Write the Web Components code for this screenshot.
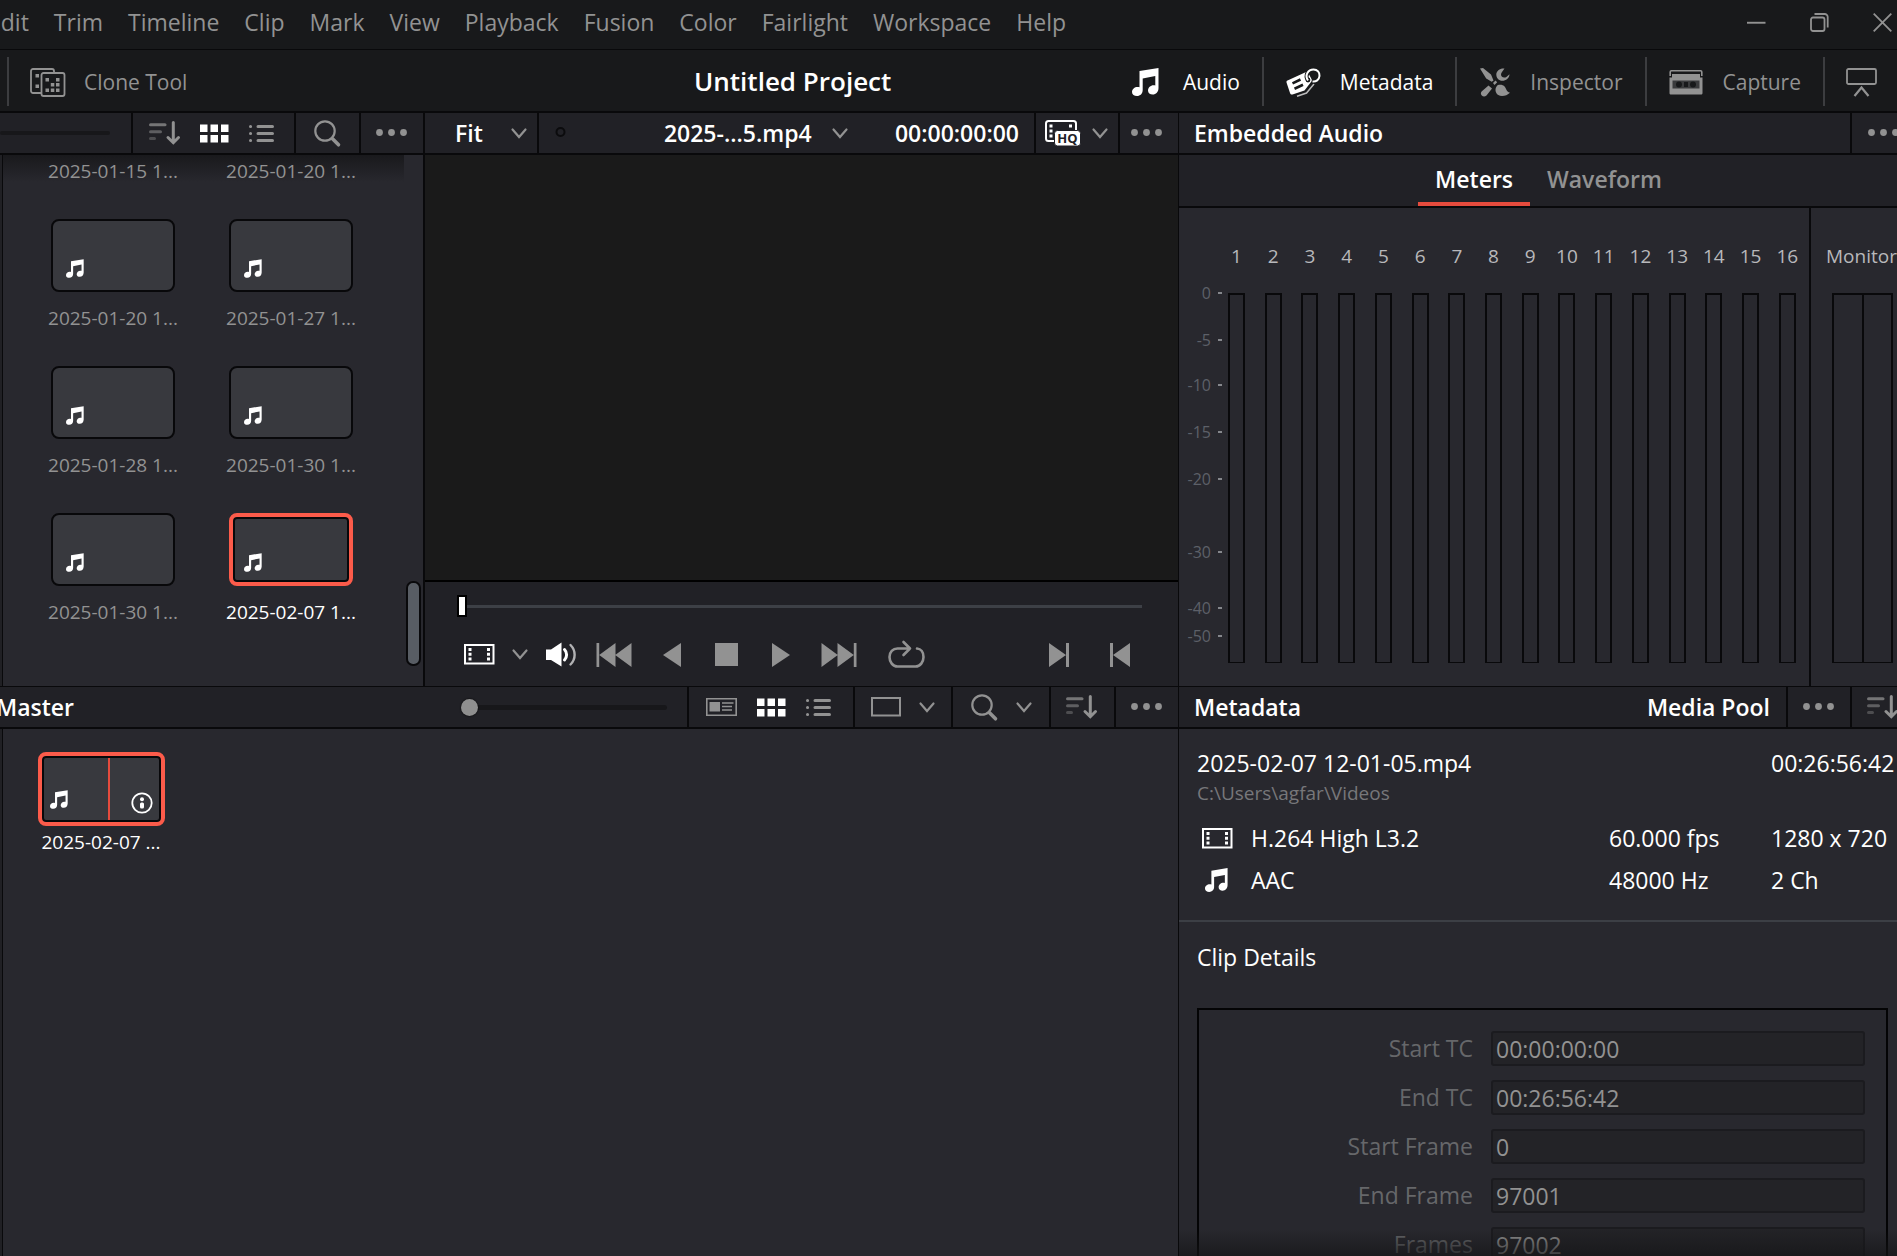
<!DOCTYPE html>
<html lang="en">
<head>
<meta charset="utf-8">
<title>Untitled Project</title>
<style>
  html, body { height: 100%; margin: 0; }
  body {
    background: #28282e;
    overflow: hidden;
    color: #fff;
    font-family: "Open Sans", "Noto Sans", sans-serif;
    font-size: 23px;
    line-height: 30px;
    --bar: #212126;
    --panel: #28282e;
    --top: #18191b;
    --line: #09090b;
    --muted: #929292;
    --accent: #e64b3d;
    --select: #fc5b4a;
  }
</style>
</head>
<body>
<media-page></media-page>
<script>
const BASE = `
  *, *::before, *::after { box-sizing: border-box; }
  button, select, input { font: inherit; color: inherit; background: none; border: 0; padding: 0; margin: 0; border-radius: 0; }
  button { display: flex; align-items: center; }
  select { appearance: none; outline: 0; }
  a { color: inherit; text-decoration: none; }
`;
function define(name, css, html) {
  const template = document.createElement('template');
  customElements.define(name, class extends HTMLElement {
    constructor() {
      super();
      template.innerHTML = `<style>${BASE}${css}</style>${typeof html === 'function' ? html(this) : html}`;
      this.attachShadow({ mode: 'open' }).append(template.content.cloneNode(true));
    }
  });
}

/* Icons: [width, height, markup] */
const NOTE = '<path d="M7.5 3 26.5 0v20c0 4-2.500 6.500-5.800 6.500-2.700 0-4.700-1.500-4.700-4 0-3 2.600-5.300 5.500-5.300.8 0 1.300.1 1.800.300V8L10.700 10.500V22c0 3.800-2.500 6-5.700 6-2.800 0-5-1.400-5-4 0-2.900 2.600-5 5.500-5 .8 0 1.400.1 2 .300z"/>';
const FILM = '<path fill="none" stroke="currentColor" stroke-width="2" d="M1 1h28.500v18.500H1z"/><g><path d="M4.500 4h3v3h-3zM4.500 8.800h3v3h-3zM4.500 13.600h3v3h-3zM23 4h3v3h-3zM23 8.800h3v3h-3zM23 13.600h3v3h-3z"/></g>';
const ICONS = {
  sort: [31, 24, '<g stroke="currentColor" stroke-width="3" stroke-linecap="round" fill="none"><path opacity=".75" d="M1.500 3.800h14.500"/><path opacity=".55" d="M1.500 10.700h10"/><path opacity=".4" d="M1.500 17.600h4"/><path d="M24.300 1.500v19M19 16.500l5.300 5.200 5.200-5.200"/></g>'],
  grid: [29, 19, '<path d="M0 .5h7.500v7.500H0zM10.500.5H18v7.500h-7.500zM21 .5h7.500v7.500H21zM0 11h7.500v7.500H0zM10.500 11H18v7.500h-7.500zM21 11h7.500v7.500H21z"/>'],
  list: [25, 19, '<g stroke="currentColor" stroke-width="3" stroke-linecap="round"><path d="M1.500 2.500h.1M1.500 9.500h.1M1.500 16.500h.1M9 2.500h14.500M9 9.500h14.500M9 16.500h14.500"/></g>'],
  search: [27, 27, '<g fill="none" stroke="currentColor" stroke-linecap="round"><circle cx="11" cy="11" r="9.700" stroke-width="2.200"/><path stroke-width="3.600" d="m18.500 18.800 6 6"/></g>'],
  dots: [31, 8, '<circle cx="3.500" cy="3.500" r="3.400"/><circle cx="15.500" cy="3.500" r="3.400"/><circle cx="27.500" cy="3.500" r="3.400"/>'],
  chevron: [16, 11, '<path fill="none" stroke="currentColor" stroke-width="2.200" stroke-linecap="round" d="m1.500 1.500 6.500 7.500 6.500-7.500"/>'],
  ring: [11, 11, '<circle cx="5.500" cy="4" r="4" fill="none" stroke="currentColor" stroke-width="2"/>'],
  note: [27, 28, NOTE],
  film: [31, 21, FILM],
  clone: [36, 29, '<g fill="none" stroke="currentColor" stroke-width="1.800"><path d="M11 25H3a2 2 0 0 1-2-2V3a2 2 0 0 1 2-2h19a2 2 0 0 1 2 2v1"/><rect x="11.500" y="5" width="23" height="23" rx="2"/></g><path d="M5.500 6h3.500v3.500H5.500zM5.500 16.500h3.500V20H5.500zM15.500 10h3.500v3.500h-3.500zM26 10h3.500v3.500H26zM20.800 15h3.500v3.500h-3.500zM26 15h3.500v3.500H26zM15.500 20.500h3.500V24h-3.500zM20.800 20.500h3.500V24h-3.500zM26 20.500h3.500V24H26z"/>'],
  hq: [36, 26, '<rect x="1" y="1" width="30" height="20" rx="2.500" fill="none" stroke="currentColor" stroke-width="2"/><path d="M4.500 4.500h3v3h-3zM4.500 9.500h3v3h-3zM4.500 14.500h3v3h-3zM24 4.500h3v3h-3z"/><rect x="9.500" y="10.500" width="26" height="15.500" rx="3" fill="currentColor" stroke="#212126" stroke-width="1"/><text x="22.500" y="23" text-anchor="middle" font-family="Open Sans" font-size="13" font-weight="700" fill="#212126">HQ</text>'],
  tag: [34, 29, '<path d="M1.500 12.500 19 4.500c1.500-.6 2.700-.3 3.500 1l3 5.500c.5 1 .3 2-.3 2.800L18.500 22.500 6.500 26.500c-1.200.3-2-.1-2.400-1.200L.6 14.700c-.3-1 0-1.800.9-2.200z"/><path d="M11 28.300 20.500 25l7.500-9" fill="none" stroke="currentColor" stroke-width="1.500" opacity=".7"/><path d="m6.500 15.300 8-3.800M8.500 20.700l8.500-4" stroke="#18191b" stroke-width="2.600"/><circle cx="22" cy="12" r="2.400" fill="#18191b"/><path d="M22 12.500C18.500 7 22 1.500 27.500 1.500c4 0 6.300 3 6 6.500-.300 3.800-3.500 6-7 5.500" fill="none" stroke="#18191b" stroke-width="4"/><path d="M22 12.500C18.500 7 22 1.500 27.500 1.500c4 0 6.300 3 6 6.500-.300 3.800-3.500 6-7 5.500" fill="none" stroke="currentColor" stroke-width="2"/>'],
  tools: [31, 28, '<g transform="translate(1)"><path d="M0 .5 3 0l8 6.500 2.500 6-1.800 1.300-5.500-3.300zM13 15l2.500-2.500 1.700 1.700L14.500 17z"/><path d="M24.500.5c-4.500-.5-8.200 2.300-8.200 6 0 1.800.6 3.300 1.700 4.500 1 1.100 2.600 1.800 4.300 1.800 3.700 0 7-2.700 7.200-6.600l-2.800 2.500c-1.500 1.200-3.600 1.200-4.700.1-1.300-1.300-1.300-3.200 0-4.700z"/><path d="m8.500 17.500 3.500 3-5.500 7c-1.500 1.200-3.500 1.200-4.700 0-1.200-1.100-1.200-2.800-.2-4zM17.500 17.200c2.500-1 5.500-.5 7.300 1.500 1.500 1.800 1.200 4.500 5.200 6-3 3-8.500 4.300-11.700 2.300-3.300-2-3.800-7-.8-9.800z"/></g>'],
  tape: [34, 25, '<path fill="none" stroke="currentColor" stroke-width="1.600" d="M1.200 6V2c0-.8.4-1.200 1.200-1.200h29.200c.8 0 1.200.4 1.200 1.200v4"/><path d="M3 4h28v3.500h2.500V23c0 1-.6 1.600-1.600 1.600H2.100C1.100 24.600.5 24 .5 23V7.500H3z"/><rect x="3.500" y="10.500" width="27" height="8" fill="#3a3b3d"/><circle cx="10" cy="14.500" r="3" fill="#18191b"/><circle cx="24" cy="14.500" r="3" fill="#18191b"/><path fill="#18191b" d="M15 12h4v5h-4z"/>'],
  screen: [31, 29, '<g fill="none" stroke="currentColor" stroke-width="1.800"><rect x="1" y="1" width="29" height="15" rx="1.500"/><path stroke-width="2.200" d="m8.500 28 7-8.500 7 8.500"/></g>'],
  minimize: [19, 19, '<path d="M0 8.800h18.500v1.900H0z"/>'],
  restore: [19, 19, '<g fill="none" stroke="currentColor" stroke-width="1.800"><rect x="1" y="4.500" width="13.500" height="13.500" rx="2"/><path d="M4.500 1h10.200a3 3 0 0 1 3 3v10.500"/></g>'],
  close: [19, 19, '<path fill="none" stroke="currentColor" stroke-width="1.800" d="m.7.700 17.600 17.600M18.300.7.700 18.300"/>'],
  speaker: [32, 25, '<path d="M1 7.500h5L16.500.5v24L6 18H1z"/><g fill="none" stroke="currentColor" stroke-linecap="round"><path stroke-width="3" d="M19.500 7.500c2.800 3 2.800 7.500 0 10.500"/><path stroke-width="2.400" opacity=".65" d="M25.500 3c5.500 5.500 5.500 14 0 19.500"/></g>'],
  first: [36, 24, '<path d="M.5 0h2.700v24H.5zM19.500 0v24L3.200 12zM35.500 0v24L19.200 12z"/>'],
  reverse: [18, 24, '<path d="M18 0v24L0 12z"/>'],
  stop: [23, 23, '<path d="M0 0h23v23H0z"/>'],
  play: [18, 24, '<path d="M0 0v24l18-12z"/>'],
  last: [36, 24, '<path d="M32.800 0h2.700v24h-2.700zM.5 0v24l16.300-12zM16.500 0v24l16.300-12z"/>'],
  loop: [37, 27, '<g fill="none" stroke="currentColor" stroke-width="2.600" stroke-linecap="round" stroke-linejoin="round"><path d="M29 7.500c4 .3 6.500 3.700 6.500 8.500 0 5-3.300 9.500-8 9.500h-18c-4.700 0-8-4.500-8-9.500s3.300-8.500 8-8.500H22M15.500 1l6.500 6.500-6.500 6.500"/></g>'],
  nextEdge: [20, 24, '<path d="M0 0v24l17-12zM17 0h3v24h-3z"/>'],
  prevEdge: [20, 24, '<path d="M20 0v24L3 12zM0 0h3v24H0z"/>'],
  card: [31, 18, '<path fill="none" stroke="currentColor" stroke-width="1.600" d="M.8.800h29.400v16.400H.8z"/><path d="M3.500 4h10.500v9.500H3.500z"/><path fill="none" stroke="currentColor" stroke-width="1.500" d="M16 5h11.500M16 8.500h10M16 12h10"/>'],
  frame: [30, 20, '<path fill="none" stroke="currentColor" stroke-width="2" d="M1 1h28v17.500H1z"/>'],
  info: [22, 22, '<circle cx="11" cy="11" r="9.700" fill="none" stroke="currentColor" stroke-width="1.800"/><circle cx="11" cy="7.200" r="2"/><rect x="9" y="10.500" width="4" height="6" rx="1.500"/>']
};
define('ui-icon', `
  :host { display: inline-flex; flex: none; color: var(--muted); }
  :host([lit]) { color: #fff; }
  svg { display: block; fill: currentColor; overflow: visible; }
`, host => {
  const [w, h, body] = ICONS[host.getAttribute('name')];
  const width = host.getAttribute('width') || w;
  return `<svg width="${width}" height="${Math.round(h * width / w)}" viewBox="0 0 ${w} ${h}" aria-hidden="true">${body}</svg>`;
});
const btn = (icon, label, lit) => `<button aria-label="${label}"><ui-icon name="${icon}"${lit ? ' lit' : ''}></ui-icon></button>`;

/* Top menu with window buttons */
define('menu-bar', `
  :host { display: flex; flex: none; justify-content: space-between; height: 50px; background: var(--top); color: var(--muted); border-bottom: 1px solid var(--line); padding: 0 5px 5px 0; }
  nav, div { display: flex; align-items: center; }
  nav { gap: 25px; margin-left: -12px; }
  div { gap: 44px; }
`, `<nav>${['Edit', 'Trim', 'Timeline', 'Clip', 'Mark', 'View', 'Playback', 'Fusion', 'Color', 'Fairlight', 'Workspace', 'Help'].map(t => `<button>${t}</button>`).join('')}</nav>
  <div>${btn('minimize', 'Minimize')}${btn('restore', 'Restore')}${btn('close', 'Close')}</div>`);

/* One labelled panel switch */
define('tool-toggle', `
  :host { display: flex; align-items: center; height: 49px; }
  :host([divided]) { border-left: 2px solid #3c3d40; }
  button { color: var(--muted); height: 49px; gap: 20px; padding: 2px 22px 0; font-size: 21px; }
  :host(:not([divided])) button { gap: 24px; }
  :host([lit]) button { color: #fff; }
  :host([lit]) ui-icon { color: #fff; }
  :host([compact]) button { gap: 18px; padding: 2px 20px 0 21px; }
`, host => `<button aria-label="${host.textContent || 'Presentation'}"><ui-icon name="${host.getAttribute('icon')}"></ui-icon><slot></slot></button>`);

define('tool-bar', `
  :host { display: grid; flex: none; grid-template-columns: 687px auto 1fr; align-items: center; height: 63px; background: var(--top); border-bottom: 2px solid var(--line); padding: 1px 0 0 7px; }
  h1 { margin: 0; font-size: 26px; font-weight: 600; line-height: 34px; white-space: nowrap; }
  .right { display: flex; justify-content: flex-end; }
`, `<tool-toggle divided compact icon="clone">Clone Tool</tool-toggle><h1>Untitled Project</h1>
  <div class="right"><tool-toggle lit icon="note">Audio</tool-toggle><tool-toggle lit divided icon="tag">Metadata</tool-toggle><tool-toggle divided icon="tools">Inspector</tool-toggle><tool-toggle divided icon="tape">Capture</tool-toggle><tool-toggle divided compact icon="screen"></tool-toggle></div>`);

/* Panel header strip and its cells */
define('panel-bar', `
  :host { display: flex; flex: none; align-items: stretch; height: 42px; background: var(--bar); border-bottom: 2px solid var(--line); font-weight: 600; white-space: nowrap; overflow: hidden; }
`, '<slot></slot>');
define('bar-cell', `
  :host { display: flex; align-items: center; flex: none; border-left: 2px solid var(--line); padding: 0 16px 0 15px; gap: 18px; }
  :host([plain]) { border-left: 0; }
  :host([grow]) { flex: 1; }
`, '<slot></slot>');

define('size-slider', `
  :host { display: flex; align-items: center; width: 206px; }
  input { appearance: none; width: 100%; height: 18px; display: block; }
  input::-webkit-slider-runnable-track { height: 5px; border-radius: 3px; background: #17171a; }
  input::-webkit-slider-thumb { appearance: none; width: 17px; height: 17px; margin-top: -6px; border-radius: 50%; background: #8f8f8f; box-shadow: 0 0 2px #000; }
`, '<input type="range" min="0" max="100" value="0" aria-label="Thumbnail size">');

define('clip-thumb', `
  :host { display: flex; flex-direction: column; align-items: center; width: 132px; gap: 12px; font-size: 19px; line-height: 28px; color: var(--muted); white-space: nowrap; }
  .box { width: 124px; height: 73px; background: #38393e; border: 2px solid #08080a; border-radius: 8px; display: flex; align-items: flex-end; padding: 0 12px 12px 13px; }
  :host([selected]) { color: #fff; }
  :host([selected]) .box { border: 4px solid var(--select); box-shadow: inset 0 0 0 2px #08080a; padding: 0 10px 10px 11px; }
  :host([wide]) { gap: 2px; }
  :host([wide]) .box { width: 127px; height: 74px; justify-content: space-between; align-items: stretch; padding: 0 8px 0 8px; }
  :host([wide]) .box > * { align-self: flex-end; margin-bottom: 13px; }
  :host([wide]) .box > .info { margin-bottom: 8px; color: #fff; }
  :host([wide]) .box > .head { align-self: stretch; width: 2px; margin: 2px 0 2px 19px; background: var(--accent); }
`, host => `<div class="box"><ui-icon name="note" width="18" lit></ui-icon>${host.hasAttribute('wide') ? '<span class="head"></span><ui-icon class="info" name="info" lit></ui-icon>' : ''}</div><span><slot></slot></span>`);

define('media-browser', `
  :host { display: flex; flex-direction: column; min-width: 0; min-height: 0; }
  .slider { width: 110px; height: 4px; border-radius: 2px; background: #17171a; }
  .body { flex: 1; display: flex; background: var(--panel); border-left: 1px solid var(--line); margin-left: 2px; min-height: 0; overflow: hidden; }
  .grid { flex: 1; display: grid; grid-template-columns: 132px 132px; column-gap: 46px; row-gap: 34px; align-content: end; padding: 0 0 60px 44px; background: linear-gradient(#19191c, #28282e 27px); }
  .scroll { width: 19px; display: flex; flex-direction: column; justify-content: flex-end; align-items: center; padding-bottom: 20px; }
  .scroll i { width: 15px; height: 85px; border-radius: 7px; background: #585d64; border: 2px solid #09090b; }
`, `<panel-bar><bar-cell plain grow style="padding-left:0"><span class="slider"></span></bar-cell>
  <bar-cell style="padding:0 20px 0 16px;gap:20px">${btn('sort', 'Sort')}${btn('grid', 'Thumbnails', 1)}${btn('list', 'List')}</bar-cell>
  <bar-cell style="padding:0 18px">${btn('search', 'Search')}</bar-cell><bar-cell>${btn('dots', 'Options')}</bar-cell></panel-bar>
  <div class="body"><div class="grid">${['2025-01-15 1...', '2025-01-20 1...', '2025-01-20 1...', '2025-01-27 1...', '2025-01-28 1...', '2025-01-30 1...', '2025-01-30 1...'].map(t => `<clip-thumb>${t}</clip-thumb>`).join('')}<clip-thumb selected>2025-02-07 1...</clip-thumb></div><div class="scroll"><i></i></div></div>`);

define('clip-viewer', `
  :host { display: flex; flex-direction: column; border-left: 2px solid var(--line); min-width: 0; min-height: 0; }
  .fit { width: 56px; } .file { width: 168px; }
  .screen { flex: 1; background: #1a1a1a; border-bottom: 2px solid #000; }
  .controls { background: var(--bar); padding: 13px 36px 18px 32px; display: flex; flex-direction: column; gap: 23px; }
  .scrub { appearance: none; width: 100%; height: 23px; display: block; }
  .scrub::-webkit-slider-runnable-track { height: 3px; background: #3d4046; }
  .scrub::-webkit-slider-thumb { appearance: none; width: 10px; height: 22px; margin-top: -10px; background: #fff; border: 2px solid #000; }
  .row { display: flex; align-items: center; height: 27px; padding: 0 12px 0 7px; }
  .row button:nth-child(n+2) { margin-left: 17px; }
  .row button:nth-child(4) { margin-left: 19px; }
  .row button:nth-child(n+5) { margin-left: 31px; }
  .row button:nth-child(6), .row button:nth-child(7) { margin-left: 34px; }
  .row .edge:nth-child(10) { margin-left: auto; }
  .row .edge:nth-child(11) { margin-left: 41px; }
`, `<panel-bar><bar-cell plain style="padding:0 10px 0 30px;gap:0"><select class="fit" aria-label="Zoom"><option>Fit</option></select><ui-icon name="chevron"></ui-icon></bar-cell>
  <bar-cell grow style="padding:0 15px 0 16px;gap:0"><ui-icon name="ring" style="color:#0b0b0d"></ui-icon><span style="flex:1"></span><select class="file" aria-label="Clip"><option>2025-...5.mp4</option></select><ui-icon name="chevron"></ui-icon><span style="padding-left:47px">00:00:00:00</span></bar-cell>
  <bar-cell style="padding:0 10px 0 9px;gap:11px">${btn('hq', 'Quality', 1)}${btn('chevron', 'Quality menu')}</bar-cell><bar-cell style="padding:0 16px 0 11px">${btn('dots', 'Options')}</bar-cell></panel-bar>
  <div class="screen"></div>
  <div class="controls"><input class="scrub" type="range" value="0" aria-label="Position"><div class="row">
  ${btn('film', 'Source', 1)}${btn('chevron', 'Source menu')}${btn('speaker', 'Mute', 1)}${btn('first', 'First frame')}${btn('reverse', 'Play reverse')}${btn('stop', 'Stop')}${btn('play', 'Play')}${btn('last', 'Last frame')}${btn('loop', 'Loop')}<button class="edge" aria-label="Next edit"><ui-icon name="nextEdge"></ui-icon></button><button class="edge" aria-label="Previous edit"><ui-icon name="prevEdge"></ui-icon></button></div></div>`);

const SCALE = [['0', 47], ['-5', 45], ['-10', 47], ['-15', 46], ['-20', 73], ['-30', 56], ['-40', 28], ['-50', 28]];
define('audio-meters', `
  :host { display: flex; flex-direction: column; border-left: 1px solid var(--line); min-width: 0; min-height: 0; background: var(--panel); }
  .tabs { display: flex; justify-content: center; height: 53px; background: var(--bar); border-bottom: 2px solid var(--line); padding-left: 21px; font-weight: 600; }
  .tabs button { padding: 0 17px 8px; height: 51px; color: var(--muted); align-items: flex-end; border-bottom: 4px solid transparent; }
  .tabs button.on { color: #fff; border-color: var(--accent); }
  .area { flex: 1; display: flex; font-size: 19px; line-height: 26px; color: #b8b8bb; }
  .axis { width: 43px; display: flex; flex-direction: column; padding: 84px 0 23px; font-size: 16px; color: #5d6068; }
  .axis div { display: flex; justify-content: flex-end; align-items: center; gap: 7px; height: 2px; }
  .axis i { width: 4px; height: 2px; background: #85878c; }
  .bars { flex: 1; display: flex; justify-content: space-between; padding: 35px 13px 23px 6px; }
  .bars div { width: 17px; display: flex; flex-direction: column; align-items: center; gap: 24px; }
  .bars i { flex: 1; width: 17px; border: 2px solid var(--line); border-bottom-width: 1px; }
  .monitor { width: 88px; border-left: 2px solid var(--line); padding: 35px 4px 23px 15px; display: flex; flex-direction: column; gap: 24px; overflow: hidden; white-space: nowrap; }
  .monitor div { flex: 1; display: flex; margin-left: 6px; border: 2px solid var(--line); border-bottom-width: 1px; }
  .monitor i { flex: 1; } .monitor i + i { border-left: 2px solid var(--line); }
`, `<panel-bar><bar-cell plain grow>Embedded Audio</bar-cell><bar-cell style="padding:0 0 0 16px;width:47px">${btn('dots', 'Options')}</bar-cell></panel-bar>
  <div class="tabs"><button class="on">Meters</button><button>Waveform</button></div>
  <div class="area"><div class="axis">${SCALE.map(([t, n]) => `<section style="flex:${n} 0 0px"><div><span>${t}</span><i></i></div></section>`).join('')}</div>
  <div class="bars">${Array.from({ length: 16 }, (_, n) => `<div><span>${n + 1}</span><i></i></div>`).join('')}</div>
  <div class="monitor"><span>Monitor</span><div><i></i><i></i></div></div></div>`);

define('media-pool', `
  :host { display: flex; flex-direction: column; border-top: 1px solid var(--line); min-width: 0; }
  .body { flex: 1; background: var(--panel); border-left: 1px solid var(--line); margin-left: 2px; padding: 23px 32px; }
`, `<panel-bar><bar-cell plain style="padding:0;width:461px"><span style="margin-left:-4px">Master</span></bar-cell><bar-cell plain grow style="padding:0"><size-slider></size-slider></bar-cell>
  <bar-cell style="padding:0 22px 0 17px;gap:20px">${btn('card', 'Metadata view')}${btn('grid', 'Thumbnails', 1)}${btn('list', 'List')}</bar-cell>
  <bar-cell style="padding:0 16px">${btn('frame', 'Aspect')}${btn('chevron', 'Aspect menu')}</bar-cell>
  <bar-cell style="padding:0 17px 0 18px">${btn('search', 'Search')}${btn('chevron', 'Search menu')}</bar-cell>
  <bar-cell style="padding:0 17px 0 15px">${btn('sort', 'Sort')}</bar-cell><bar-cell>${btn('dots', 'Options')}</bar-cell></panel-bar>
  <div class="body"><clip-thumb wide selected>2025-02-07 ...</clip-thumb></div>`);

const FIELDS = [['Start TC', '00:00:00:00'], ['End TC', '00:26:56:42'], ['Start Frame', '0'], ['End Frame', '97001'], ['Frames', '97002']];
define('clip-metadata', `
  :host { display: flex; flex-direction: column; border-left: 1px solid var(--line); border-top: 1px solid var(--line); background: var(--panel); min-width: 0; min-height: 0; overflow: hidden; position: relative; }
  :host::after { content: ""; position: absolute; inset: auto 0 0 0; height: 27px; background: linear-gradient(#15151700, #151517b0); pointer-events: none; }
  .summary { display: grid; flex: none; grid-template-columns: 1fr 162px 126px; padding: 19px 0 19px 18px; border-bottom: 2px solid #3c3f45; white-space: nowrap; }
  .name { grid-column: 1 / 3; }
  .path { grid-column: 1 / 4; font-size: 19px; color: #77777a; margin-bottom: 9px; }
  .row { line-height: 42px; }
  .codec { display: flex; align-items: center; }
  .codec span { width: 54px; display: flex; padding-left: 5px; }
  .codec .audio { padding-left: 8px; }
  h2 { font-size: inherit; font-weight: 400; margin: 20px 0 36px 18px; }
  form { margin: 0 9px 0 18px; flex: 1 0 auto; border: 2px solid #040405; padding: 21px 21px 0; display: grid; grid-template-columns: 1fr 374px; column-gap: 18px; row-gap: 14px; align-content: start; }
  label { text-align: right; line-height: 35px; color: #66676a; }
  input { height: 35px; width: 100%; background: #232327; border: 2px solid #1b1b1f; border-radius: 3px; padding: 0 3px; color: var(--muted); outline: 0; }
`, `<panel-bar><bar-cell plain grow>Metadata</bar-cell><bar-cell plain>Media Pool</bar-cell><bar-cell>${btn('dots', 'Options')}</bar-cell><bar-cell style="padding:0 0 0 15px;width:47px">${btn('sort', 'Sort')}</bar-cell></panel-bar>
  <div class="summary"><span class="name">2025-02-07 12-01-05.mp4</span><span>00:26:56:42</span><span class="path">C:\\Users\\agfar\\Videos</span>
  <div class="row codec"><span><ui-icon name="film" lit></ui-icon></span>H.264 High L3.2</div><span class="row">60.000 fps</span><span class="row">1280 x 720</span>
  <div class="row codec"><span class="audio"><ui-icon name="note" width="23" lit></ui-icon></span>AAC</div><span class="row">48000 Hz</span><span class="row">2 Ch</span></div>
  <h2>Clip Details</h2>
  <form>${FIELDS.map(([l, v], n) => `<label for="f${n}">${l}</label><input id="f${n}" type="text" value="${v}">`).join('')}</form>`);

define('media-page', `
  :host { display: flex; flex-direction: column; height: 100vh; overflow: hidden; background: #202024; }
  .top { display: grid; flex: none; height: 573px; grid-template-columns: 423px minmax(0, 1fr) 719px; grid-template-rows: 100%; }
  .bottom { flex: 1; display: grid; grid-template-columns: minmax(0, 1fr) 719px; grid-template-rows: 100%; min-height: 0; }
`, `<menu-bar></menu-bar><tool-bar></tool-bar>
  <div class="top"><media-browser></media-browser><clip-viewer></clip-viewer><audio-meters></audio-meters></div>
  <div class="bottom"><media-pool></media-pool><clip-metadata></clip-metadata></div>`);
</script>
</body>
</html>
